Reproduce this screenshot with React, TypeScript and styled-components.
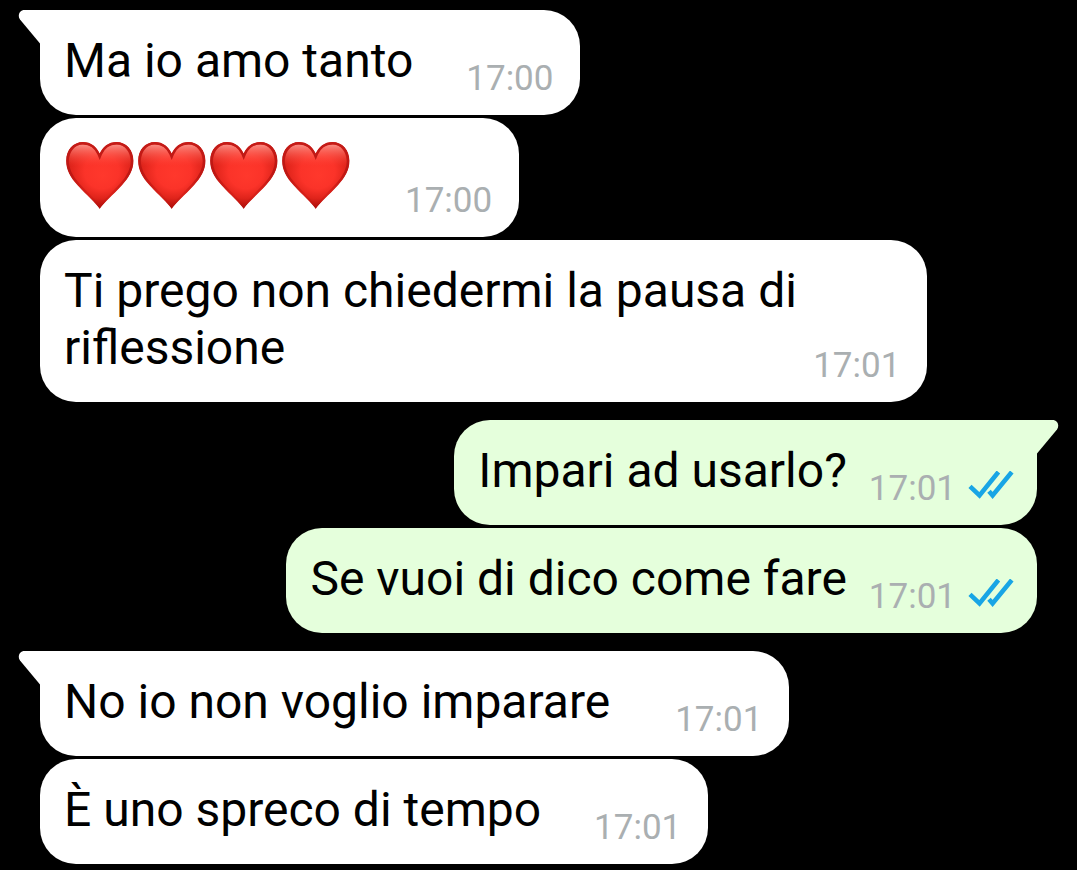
import React from "react";
import styled, { createGlobalStyle } from "styled-components";

type Side = "in" | "out";
type Spacing = "wrapped" | "tight" | "normal" | "loose";

interface Message {
  text?: string;
  hearts?: number;
  time: string;
  spacing?: Spacing;
}

interface Group {
  side: Side;
  messages: Message[];
}

const groups: Group[] = [
  {
    side: "in",
    messages: [
      { text: "Ma io amo tanto", time: "17:00" },
      { hearts: 4, time: "17:00" },
      { text: "Ti prego non chiedermi la pausa di riflessione", time: "17:01", spacing: "wrapped" },
    ],
  },
  {
    side: "out",
    messages: [
      { text: "Impari ad usarlo?", time: "17:01", spacing: "tight" },
      { text: "Se vuoi di dico come fare", time: "17:01", spacing: "tight" },
    ],
  },
  {
    side: "in",
    messages: [
      { text: "No io non voglio imparare", time: "17:01", spacing: "loose" },
      { text: "È uno spreco di tempo", time: "17:01" },
    ],
  },
];

const gaps: Record<Spacing, number> = { wrapped: 8, tight: 22, normal: 53, loose: 65 };
const bubbleColor: Record<Side, string> = { in: "#fff", out: "#e5ffdc" };

const GlobalStyle = createGlobalStyle`
  * { box-sizing: border-box; }
  body {
    margin: 0;
    background: #000;
    color: #000;
    font-family: Roboto, "Noto Sans", sans-serif;
  }
`;

const Chat = styled.main`
  display: flex;
  flex-direction: column;
  gap: 18px;
  padding: 10px 40px 6px;
`;

const MessageGroup = styled.section<{ $side: Side }>`
  display: flex;
  flex-direction: column;
  align-items: ${(p) => (p.$side === "in" ? "flex-start" : "flex-end")};
  gap: 3px;
`;

const Bubble = styled.article<{ $side: Side; $tail: boolean; $spacing: Spacing }>`
  position: relative;
  display: flex;
  align-items: flex-end;
  justify-content: space-between;
  gap: ${(p) => gaps[p.$spacing]}px;
  max-width: 89%;
  padding: 0 ${(p) => (p.$side === "out" ? 23 : 27)}px 0 24px;
  border-radius: 36px;
  ${(p) => p.$tail && `border-top-${p.$side === "in" ? "left" : "right"}-radius: 0;`}
  background: ${(p) => bubbleColor[p.$side]};
`;

const Text = styled.p`
  margin: 0;
  padding: 22px 0 26px;
  font-size: 48px;
  line-height: 57px;
`;

const HeartRow = styled.div`
  display: flex;
  padding: 22px 0 26px;
`;

const HeartIcon = styled.svg`
  display: block;
  width: 72px;
  height: 71px;
`;

const Meta = styled.footer`
  display: flex;
  align-items: center;
  gap: 12px;
  padding-bottom: 15px;
  color: #aaafb1;
  font-size: 35px;
  line-height: 42px;
`;

const TicksIcon = styled.svg`
  display: block;
  width: 46px;
  height: 36px;
`;

const TailShape = styled.svg<{ $side: Side }>`
  position: absolute;
  top: 0;
  ${(p) => (p.$side === "in" ? "left" : "right")}: -22px;
  width: 24px;
  height: 36px;
  fill: ${(p) => bubbleColor[p.$side]};
`;

function Tail({ side }: { side: Side }) {
  return (
    <TailShape $side={side} viewBox="0 0 24 36" aria-hidden="true">
      <path
        transform={side === "out" ? "translate(24 0) scale(-1 1)" : undefined}
        d="M24 0H6.5C1.5 0-.8 5.5 2 9.6L22 33.5H24Z"
      />
    </TailShape>
  );
}

function Ticks() {
  return (
    <TicksIcon viewBox="0 0 46 36" role="img" aria-label="Letto">
      <g fill="none" stroke="#18a5e5" strokeWidth="4.6" strokeLinejoin="miter">
        <path d="M2 15.4L11.5 24.4L30.4 1" />
        <path d="M21 20.2L24.6 24.4L43.8 1" />
      </g>
    </TicksIcon>
  );
}

const heartPath =
  "M34.7 69C30 62.4 22 55.5 12.5 45.2C5.5 37.5 1.2 30.2 1.2 20.8C1.2 9.8 8.2 2 18 2C26 2 31.8 6.8 34.7 13.6C37.6 6.8 43.4 2 51.4 2C61.2 2 68.4 9.8 68.4 20.8C68.4 30.2 64 37.5 57 45.2C47.5 55.5 39.4 62.4 34.7 69Z";

function Heart({ id }: { id: string }) {
  return (
    <HeartIcon viewBox="-1 0 72 71" aria-hidden="true">
      <defs>
        <radialGradient
          id={`${id}-body`}
          gradientUnits="userSpaceOnUse"
          cx="35"
          cy="25"
          r="43"
          fx="38"
          fy="36"
        >
          <stop offset="0" stopColor="#ff382c" />
          <stop offset="0.4" stopColor="#fb3329" />
          <stop offset="0.7" stopColor="#df241b" />
          <stop offset="1" stopColor="#a80c08" />
        </radialGradient>
        <linearGradient id={`${id}-shine`} x1="0" y1="0" x2="0" y2="1">
          <stop offset="0" stopColor="#ffa097" stopOpacity="0.85" />
          <stop offset="0.5" stopColor="#ff6a5e" stopOpacity="0.5" />
          <stop offset="1" stopColor="#ff463a" stopOpacity="0" />
        </linearGradient>
        <linearGradient id={`${id}-rim`} x1="0" y1="0" x2="0" y2="1">
          <stop offset="0" stopColor="#c41b17" />
          <stop offset="0.45" stopColor="#bd1713" />
          <stop offset="0.8" stopColor="#c01510" stopOpacity="0.3" />
        </linearGradient>
        <clipPath id={`${id}-clip`}>
          <path d={heartPath} />
        </clipPath>
      </defs>
      <g clipPath={`url(#${id}-clip)`}>
        <path d={heartPath} fill={`url(#${id}-body)`} />
        <path
          d="M4 26C3 11 10 4.5 18 4.5C26 4.5 31 9 34.7 18C38.4 9 43.4 4.5 51.4 4.5C59.4 4.5 66.6 11 65.6 26Z"
          fill={`url(#${id}-shine)`}
        />
        <path d={heartPath} fill="none" stroke={`url(#${id}-rim)`} strokeWidth="5" />
      </g>
    </HeartIcon>
  );
}

export default function App() {
  return (
    <>
      <GlobalStyle />
      <Chat>
        {groups.map((group, g) => (
          <MessageGroup key={g} $side={group.side}>
            {group.messages.map((message, m) => (
              <Bubble
                key={m}
                $side={group.side}
                $tail={m === 0}
                $spacing={message.spacing ?? "normal"}
              >
                {m === 0 && <Tail side={group.side} />}
                {message.hearts ? (
                  <HeartRow role="img" aria-label="Quattro cuori rossi">
                    {Array.from({ length: message.hearts }, (_, i) => (
                      <Heart key={i} id={`heart-${g}-${m}-${i}`} />
                    ))}
                  </HeartRow>
                ) : (
                  <Text>{message.text}</Text>
                )}
                <Meta>
                  <time>{message.time}</time>
                  {group.side === "out" && <Ticks />}
                </Meta>
              </Bubble>
            ))}
          </MessageGroup>
        ))}
      </Chat>
    </>
  );
}
